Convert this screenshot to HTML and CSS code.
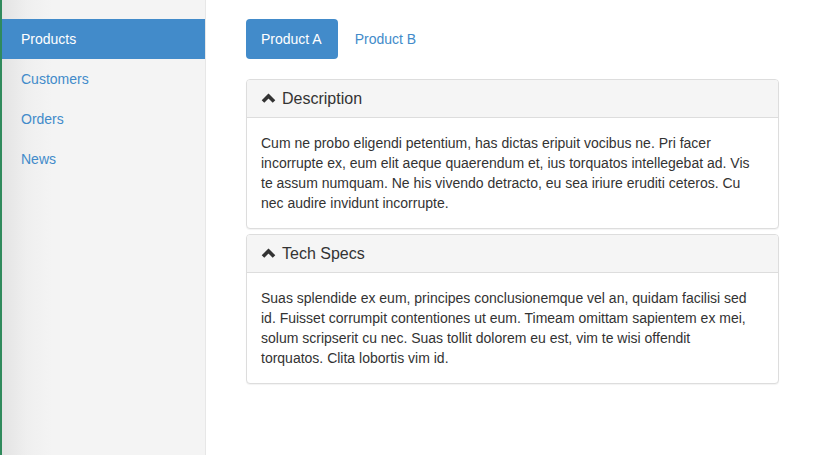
FILE: index.html
```html
<!DOCTYPE html>
<html>
<head>
<meta charset="utf-8">
<link rel="stylesheet" href="styles.css">
</head>
<body>
<div class="layout">
  <nav class="sidebar">
    <a class="side-item active">Products</a>
    <a class="side-item">Customers</a>
    <a class="side-item">Orders</a>
    <a class="side-item">News</a>
  </nav>
  <main class="main">
    <div class="tabs">
      <a class="tab active">Product A</a>
      <a class="tab">Product B</a>
    </div>
    <div class="panel-group">
      <div class="panel">
        <div class="panel-heading">
          <svg class="chev" width="15" height="12" viewBox="0 0 15 12"><polyline points="2,9.5 7.5,4 13,9.5" fill="none" stroke="#333" stroke-width="3.6" stroke-linecap="butt" stroke-linejoin="miter"/></svg>
          <span>Description</span>
        </div>
        <div class="panel-body">Cum ne probo eligendi petentium, has dictas eripuit vocibus ne. Pri facer incorrupte ex, eum elit aeque quaerendum et, ius torquatos intellegebat ad. Vis te assum numquam. Ne his vivendo detracto, eu sea iriure eruditi ceteros. Cu nec audire invidunt incorrupte.</div>
      </div>
      <div class="panel">
        <div class="panel-heading">
          <svg class="chev" width="15" height="12" viewBox="0 0 15 12"><polyline points="2,9.5 7.5,4 13,9.5" fill="none" stroke="#333" stroke-width="3.6" stroke-linecap="butt" stroke-linejoin="miter"/></svg>
          <span>Tech Specs</span>
        </div>
        <div class="panel-body">Suas splendide ex eum, principes conclusionemque vel an, quidam facilisi sed id. Fuisset corrumpit contentiones ut eum. Timeam omittam sapientem ex mei, solum scripserit cu nec. Suas tollit dolorem eu est, vim te wisi offendit torquatos. Clita lobortis vim id.</div>
      </div>
    </div>
  </main>
</div>
</body>
</html>
```

FILE: styles.css
```css
* { box-sizing: border-box; }
html, body { margin: 0; padding: 0; height: 100%; }
body {
  font-family: "Liberation Sans", Arial, Helvetica, sans-serif;
  font-size: 14px;
  line-height: 20px;
  color: #333;
  background: #fff;
}
.layout {
  display: flex;
  height: 455px;
}
.sidebar {
  width: 206px;
  flex: none;
  padding-top: 19px;
  display: flex;
  flex-direction: column;
  background: linear-gradient(to right, #e3e3e3 0px, #efefef 25px, #f4f4f4 50px, #f4f4f4 100%);
  border-left: 2px solid #2f8a5c;
  border-right: 1px solid #e7e7e7;
}
.side-item {
  display: block;
  height: 40px;
  line-height: 40px;
  padding-left: 19px;
  color: #428bca;
  font-size: 14px;
  text-decoration: none;
}
.side-item.active {
  background: #428bca;
  color: #fff;
}
.main {
  flex: 1;
  padding: 19px 34px 0 40px;
}
.tabs {
  display: flex;
  gap: 2px;
  margin-bottom: 20px;
}
.tab {
  display: block;
  height: 40px;
  line-height: 40px;
  padding: 0 15px 0 15px;
  border-radius: 4px;
  color: #428bca;
  text-decoration: none;
}
.tab.active {
  background: #428bca;
  color: #fff;
  padding-right: 16px;
}
.panel-group {
  width: 533px;
  display: flex;
  flex-direction: column;
  gap: 5px;
}
.panel {
  border: 1px solid #ddd;
  border-radius: 4px;
  background: #fff;
  box-shadow: 0 1px 1px rgba(0,0,0,0.05);
  overflow: hidden;
}
.panel-heading {
  background: #f5f5f5;
  border-bottom: 1px solid #ddd;
  height: 38px;
  padding: 0 14px;
  display: flex;
  align-items: center;
  gap: 6px;
  font-size: 16px;
  color: #333;
}
.chev { display: block; margin-top: -2px; }
.panel-body {
  padding: 15px 24px 15px 14px;
  line-height: 20px;
}
```
